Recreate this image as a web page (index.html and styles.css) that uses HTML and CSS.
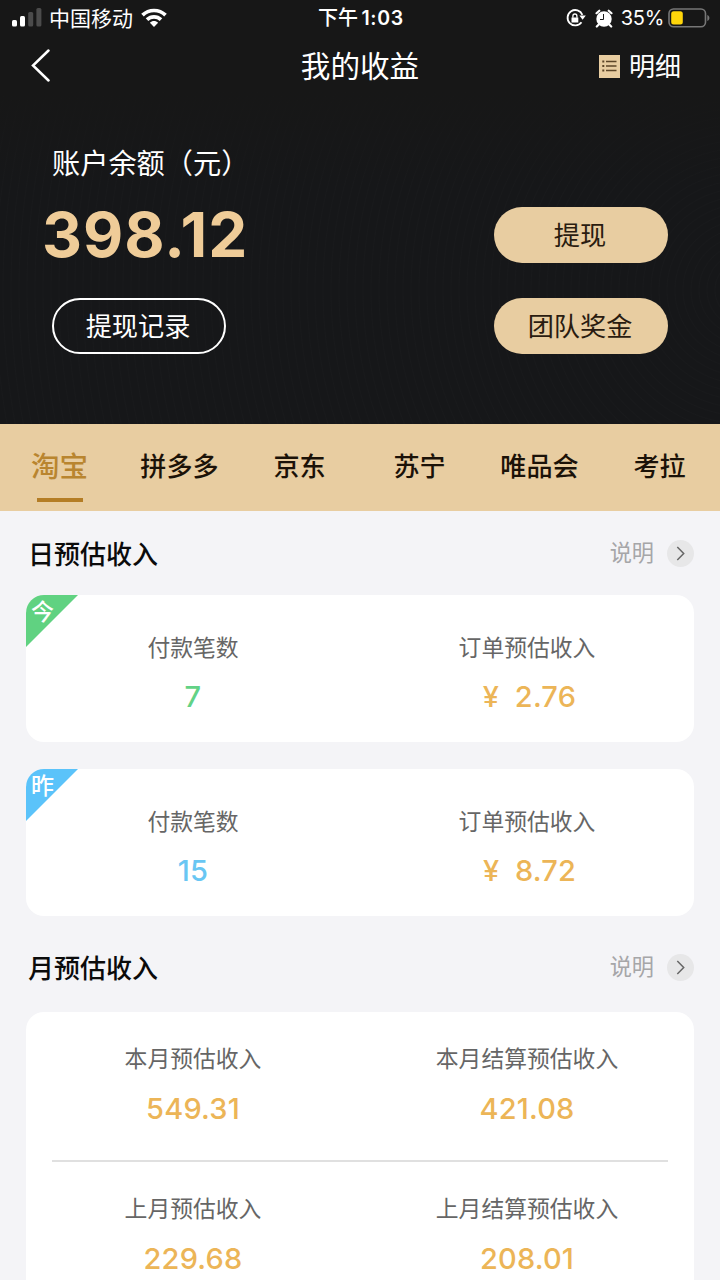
FILE: index.html
```html
<!DOCTYPE html>
<html lang="zh-CN">
<head>
<meta charset="utf-8">
<title>我的收益</title>
<link rel="stylesheet" href="styles.css">
</head>
<body>
<div class="app">
  <header class="hero">
    <div class="status">
      <div class="status-left">
        <svg class="signal" width="30" height="20" viewBox="0 0 30 20"><g fill="#fff"><rect x="0" y="12" width="5" height="6.500" rx="1.500"/><rect x="8" y="8" width="5" height="10.500" rx="1.500"/></g><g fill="#4b4b4b"><rect x="16.200" y="4" width="5" height="14.500" rx="1.500"/><rect x="24.400" y="0" width="5" height="18.500" rx="1.500"/></g></svg>
        <span class="carrier">中国移动</span>
        <svg class="wifi" width="26" height="20" viewBox="0 0 26 20"><g fill="none" stroke="#fff" stroke-width="3.700"><path d="M1.500 7.200C8 .9 18 .9 24.500 7.200"/><path d="M6 11.700C10 7.900 16 7.900 20 11.700"/></g><path fill="#fff" d="M8.900 14.800c2.300-2.300 5.900-2.300 8.200 0L13 19z"/></svg>
      </div>
      <div class="clock">下午 <b>1:03</b></div>
      <div class="status-right">
        <svg width="20" height="20" viewBox="0 0 20 20"><path d="M15.500 14.300A7.700 7.700 0 1 1 16.400 6.800" fill="none" stroke="#fff" stroke-width="1.800"/><path fill="#fff" d="M13.400 7.500h6.400l-3.200 4.300zM5.500 9.400h6.800v5.200H5.500z"/><path d="M6.900 9.700V8a2 2 0 0 1 4 0v1.700" fill="none" stroke="#fff" stroke-width="1.300"/></svg>
        <svg class="alarm" width="18" height="19" viewBox="0 0 18 19"><circle cx="9" cy="10" r="7.700" fill="#fff"/><path d="M1.500 4.200l2.800-2.500M16.500 4.200l-2.800-2.500M3.500 15.800l-1.700 1.700M14.500 15.800l1.700 1.700" stroke="#fff" stroke-width="2.200" stroke-linecap="round"/><path d="M8.500 5v5.500H5" fill="none" stroke="#171717" stroke-width="1"/></svg>
        <span class="percent">35%</span>
        <svg class="battery" width="42" height="20" viewBox="0 0 42 20"><rect x="1" y="1" width="36.500" height="17.800" rx="4.500" fill="none" stroke="#777" stroke-width="1.600"/><rect x="3.200" y="3.200" width="11.600" height="13.400" rx="2.500" fill="#ffd60a"/><path d="M39.300 7v6c2.800-1 2.800-5 0-6z" fill="#777"/></svg>
      </div>
    </div>
    <nav class="nav">
      <svg class="back" width="20" height="34" viewBox="0 0 20 34"><path d="M17.500 1.500L2 16.500 17.500 31.500" fill="none" stroke="#fff" stroke-width="2.500" stroke-linecap="round"/></svg>
      <h1 class="title">我的收益</h1>
      <a class="detail"><svg width="21" height="23" viewBox="0 0 21 23"><path fill="#e8cda1" d="M0 0h21v23H0z"/><path d="M7 6.500h10.500M7 11h10.500M7 15.500h10.500" stroke="#5c4628" stroke-width="1.300"/><path d="M3.300 6.500h2M3.300 11h2M3.300 15.500h2" stroke="#5c4628" stroke-width="1.800"/></svg>明细</a>
    </nav>
    <div class="account">
      <div class="balance">
        <div class="balance-label">账户余额（元）</div>
        <div class="amount">398.12</div>
        <a class="pill outline">提现记录</a>
      </div>
      <div class="actions"><a class="pill">提现</a><a class="pill">团队奖金</a></div>
    </div>
  </header>
  <div class="tabs">
    <a class="tab active">淘宝</a><a class="tab">拼多多</a><a class="tab">京东</a><a class="tab">苏宁</a><a class="tab">唯品会</a><a class="tab">考拉</a>
  </div>
  <main class="content">
    <div class="section-head day"><h2>日预估收入</h2><a class="help">说明<svg width="27" height="27" viewBox="0 0 27 27"><circle cx="13.500" cy="13.500" r="13.500" fill="#e7e7e8"/><path d="M10.300 7l6.400 6.500-6.400 6.500" fill="none" stroke="#666" stroke-width="1.500"/></svg></a></div>
    <section class="card row">
      <span class="corner today"><i>今</i></span>
      <div class="stat"><span class="label">付款笔数</span><span class="value green">7</span></div>
      <div class="stat"><span class="label">订单预估收入</span><span class="value money"><span class="yen">¥</span>2.76</span></div>
    </section>
    <section class="card row">
      <span class="corner yesterday"><i>昨</i></span>
      <div class="stat"><span class="label">付款笔数</span><span class="value blue">15</span></div>
      <div class="stat"><span class="label">订单预估收入</span><span class="value money"><span class="yen">¥</span>8.72</span></div>
    </section>
    <div class="section-head month"><h2>月预估收入</h2><a class="help">说明<svg width="27" height="27" viewBox="0 0 27 27"><circle cx="13.500" cy="13.500" r="13.500" fill="#e7e7e8"/><path d="M10.300 7l6.400 6.500-6.400 6.500" fill="none" stroke="#666" stroke-width="1.500"/></svg></a></div>
    <section class="card monthly">
      <div class="row">
        <div class="stat"><span class="label">本月预估收入</span><span class="value">549.31</span></div>
        <div class="stat"><span class="label">本月结算预估收入</span><span class="value">421.08</span></div>
      </div>
      <hr class="divider">
      <div class="row">
        <div class="stat"><span class="label">上月预估收入</span><span class="value">229.68</span></div>
        <div class="stat"><span class="label">上月结算预估收入</span><span class="value">208.01</span></div>
      </div>
    </section>
  </main>
</div>
</body>
</html>
```

FILE: styles.css
```css
* { box-sizing: border-box; }
body { margin: 0; font-family: Inter, "Noto Sans CJK SC", sans-serif; }
h1, h2 { margin: 0; font-weight: 400; }
svg { display: block; flex: none; }
.app { width: 720px; height: 1280px; overflow: hidden; background: #f4f4f7; }

.hero {
  height: 424px; color: #fff;
  background:
    linear-gradient(#171717 90px, transparent 190px),
    repeating-radial-gradient(circle at 745px 290px, transparent 0 5px, rgba(255,255,255,.012) 6px, transparent 7px 8px),
    #161719;
}
.status { height: 36px; display: grid; grid-template-columns: 1fr auto 1fr; align-items: center; padding: 0 10px 0 12px; }
.status-left, .status-right { display: flex; align-items: center; }
.status-right { justify-content: flex-end; }
.carrier { margin: 0 8px 0 7px; padding-top: 1px; font-size: 21px; line-height: 35px; }
.clock { padding-top: 1px; font-size: 20px; font-weight: 500; line-height: 35px; white-space: pre; word-spacing: -2px; }
.clock b { font-weight: 600; font-size: 19.500px; letter-spacing: .7px; }
.alarm { margin-left: 9px; }
.percent { margin: 0 4px 0 8px; font-size: 20px; letter-spacing: -.3px; }

.nav { height: 60px; display: grid; grid-template-columns: 1fr auto 1fr; align-items: center; padding: 0 31px; }
.title { font-size: 29.600px; line-height: 60px; }
.detail { justify-self: end; display: flex; align-items: center; gap: 9px; margin-right: 8px; padding-top: 1px; font-size: 26px; line-height: 59px; }
.detail svg { margin-top: -1px; }

.account { display: flex; justify-content: space-between; padding: 47px 52px 0; }
.balance-label { height: 40px; padding-top: 1px; font-size: 28.200px; line-height: 40px; }
.amount { height: 115px; margin-left: -10px; font-size: 62px; font-weight: 700; letter-spacing: 1px; line-height: 104px; color: #efcc98; }
.actions { display: flex; flex-direction: column; gap: 35px; padding-top: 64px; }
.pill { display: block; width: 174px; height: 56px; padding-right: 2px; border-radius: 28px; background: #e8cda1; color: #2a1c10; font-size: 26.200px; line-height: 58px; text-align: center; }
.outline { background: none; border: 2px solid #fff; color: #fff; line-height: 54px; }

.tabs { height: 87px; display: grid; grid-template-columns: repeat(6, 1fr); background: #e8cda1; }
.tab { display: flex; flex-direction: column; align-items: center; font-size: 26.100px; line-height: 86px; font-weight: 500; color: #1b1208; text-indent: -1px; }
.active { font-size: 28.500px; color: #b9852f; }
.active::after { content: ""; width: 46px; height: 4px; margin-top: -12px; background: #b47d25; }

.content { padding: 0 26px; }
.section-head { display: flex; justify-content: space-between; align-items: center; padding-left: 2px; }
.section-head h2 { padding-bottom: 2px; font-size: 26px; font-weight: 500; color: #0b0b0b; }
.day { height: 84px; }
.month { height: 96px; padding-top: 6px; }
.help { display: flex; align-items: center; gap: 13px; font-size: 22.200px; line-height: 30px; color: #a6a6a8; }

.card { position: relative; height: 147px; border-radius: 18px; overflow: hidden; background: #fff; }
.card + .card { margin-top: 27px; }
.row { display: grid; grid-template-columns: 1fr 1fr; align-content: start; }
.stat { display: flex; flex-direction: column; align-items: center; padding-top: 36px; }
.label { font-size: 22.800px; line-height: 34px; color: #666; }
.value { margin-top: 13px; font-size: 29px; line-height: 38px; font-weight: 500; letter-spacing: .2px; color: #ecb557; }
.money { padding-left: 5px; }
.green { color: #62d286; }
.blue { color: #68c6f3; }
.yen { display: inline-block; width: 32px; }
.corner { position: absolute; left: 0; top: 0; width: 52px; height: 52px; clip-path: polygon(0 0, 100% 0, 0 100%); color: #fff; font-size: 23px; line-height: 34px; font-weight: 500; padding-left: 5px; }
.corner i { font-style: normal; }
.today { background: #60d281; }
.yesterday { background: #5bc3fa; }
.monthly { height: 300px; }
.monthly .stat { padding-top: 30px; height: 148px; }
.monthly .value { margin-top: 14px; }
.divider { height: 2px; margin: 0 26px; border: 0; background: #e0e0e0; }
```
